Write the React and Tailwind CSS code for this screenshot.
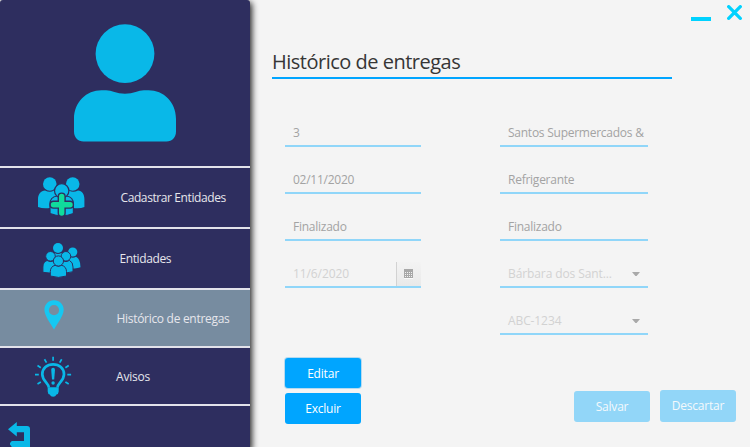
const CYAN = '#09b8e8'
const NAVY = '#2e2e5f'

function UserIcon() {
  return (
    <svg width="102" height="118" viewBox="74 23.5 102 118" fill={CYAN}>
      <circle cx="125" cy="53.2" r="29.4" />
      <path d="M74 118.500C74 101.500 86.500 89.800 101.500 89.800H106C109 89.800 111.500 90.600 113.500 91.300C121 93.800 129 93.800 136.500 91.300C138.500 90.600 141 89.800 144 89.800H148.500C163.500 89.800 176 101.500 176 118.500V131C176 137 172 141 166.500 141H83.500C78 141 74 137 74 131Z" />
    </svg>
  )
}

function AddPeopleIcon() {
  return (
    <svg width="48" height="41" viewBox="37 176 48 41" fill={CYAN}>
      <circle cx="49.8" cy="184" r="6.8" />
      <circle cx="72.700" cy="184" r="6.800" />
      <path d="M38 207V199C38 194 41 191 45 190.500Q50 193 54 190.500L62 200V208H50Q43 209 38 207Z" />
      <path d="M84.400 207V199C84.400 194 82 191 78 190.500Q73 193 69 190.500L61 200V208H73Q80 209 84.400 207Z" />
      <path d="M50 213.500V204Q50 197 57 196H66.500Q73.400 197 73.400 204V213.500Q62 218 50 213.500Z" stroke={NAVY} strokeWidth="1.2" />
      <circle cx="61.700" cy="190.800" r="7.200" stroke={NAVY} strokeWidth="1.200" />
      <path d="M61.700 196.500V213M53.500 204.700H70" stroke={NAVY} strokeWidth="8.200" strokeLinecap="round" />
      <path d="M61.700 196.500V213M53.500 204.700H70" stroke="#10dc9c" strokeWidth="5.400" strokeLinecap="round" />
    </svg>
  )
}

function GroupIcon() {
  return (
    <svg width="40" height="36" viewBox="41.500 242 40 36" fill={CYAN}>
      <circle cx="57.500" cy="248" r="5" />
      <path d="M51.500 256Q52 253.500 54 253Q57.500 255 61 253Q63 253.500 63.500 256L60 258H55Z" />
      <circle cx="72.200" cy="252" r="4.600" />
      <path d="M67 266V260Q67.500 257.500 69.300 256.800Q72.200 258.500 75.500 256.800Q80 259 80 267.300Q76 269 71 268.200Z" />
      <g stroke={NAVY} strokeWidth="1">
        <path d="M42.400 272.300V267Q42.400 262 46.500 260.500Q50 262.500 54 260.500L58 266V272Q49 274 42.400 272.300Z" />
        <path d="M72.500 271.700V267Q72.500 262 69 260.500Q65.500 262.500 62 260.500L58 266V272Q66 274 72.500 271.700Z" />
        <circle cx="50" cy="256.300" r="4.800" />
        <circle cx="65.400" cy="256.300" r="4.800" />
        <path d="M49.800 276V271.500Q50 266.500 54.600 265.300Q57.800 267 61.200 265.300Q65.800 266.500 66 271.500V276Q58 278.800 49.800 276Z" />
        <circle cx="57.900" cy="261" r="5.100" />
      </g>
    </svg>
  )
}

function PinIcon() {
  return (
    <svg width="20" height="30" viewBox="44.300 299.800 20 30">
      <path fill="#16c8f2" fillRule="evenodd" d="M54.300 300C48.700 300 44.700 304.200 44.700 309.500C44.700 315.500 51 323.500 54.300 329.300C57.600 323.500 64 315.500 64 309.500C64 304.200 59.900 300 54.300 300ZM54.300 304.900A5.100 5.100 0 1 1 54.300 315.100A5.100 5.100 0 1 1 54.300 304.900Z" />
    </svg>
  )
}

function BulbIcon() {
  return (
    <svg width="38" height="42" viewBox="34 356 38 42" fill="none" stroke={CYAN}>
      <path d="M48.800 387.500C48.500 382.500 42.300 381 42.300 374.200C42.300 368.500 47 364.300 53.100 364.300C59.200 364.300 64 368.500 64 374.200C64 381 57.800 382.500 57.500 387.500" strokeWidth="2.700" />
      <path d="M47.700 387.300H58.700V391.500Q58.500 394 56.500 394.500Q55.500 396.800 53.100 396.800Q50.700 396.800 49.700 394.500Q47.800 394 47.700 391.500Z" fill={CYAN} stroke="none" />
      <path d="M51.200 369.800Q51.200 367.800 53.100 367.800Q55 367.800 55 369.800L54.200 379.500H52Z" fill={CYAN} stroke="none" />
      <circle cx="53.100" cy="383" r="1.700" fill={CYAN} stroke="none" />
      <path d="M53.100 356.800V360.700M44.500 359.300L46.500 362.600M61.700 359.300L59.700 362.600M37.500 365.500L40.800 367.700M68.700 365.500L65.400 367.700M35 374.700H38.800M67.300 374.700H71.100M37.500 384L40.800 382M68.700 384L65.400 382" strokeWidth="1.700" />
    </svg>
  )
}

function BackIcon() {
  return (
    <svg width="22" height="25" viewBox="8 422 22 25" fill={CYAN}>
      <path d="M8 429.200L16.800 422V426H27Q30 426 30 429V447H11.800L10 444.500V443L11.800 441H24V432.200H16.800V436.400Z" />
    </svg>
  )
}

function NavItem({ className, iconClass, labelClass, icon, label }) {
  return (
    <div className={`flex shrink-0 border-b-2 border-[#e2e2ea] text-[12px] leading-4 text-[#e6e6ec] ${className}`}>
      <div className={`shrink-0 ${iconClass}`}>{icon}</div>
      <span className={`whitespace-nowrap ${labelClass}`}>{label}</span>
    </div>
  )
}

function Field({ children, textClass = 'text-[#a3a3a3] tracking-[-0.25px]', extra }) {
  return (
    <div className="mb-[21px] flex h-[26px] items-stretch border-b-2 border-[#90d6f9]">
      <span className={`ml-2 mt-1 flex-1 whitespace-nowrap text-[12px] leading-4 ${textClass}`}>{children}</span>
      {extra}
    </div>
  )
}

function Arrow() {
  return (
    <svg className="mr-2 mt-[10px] shrink-0" width="8" height="4" viewBox="0 0 8 4">
      <path d="M0 0H8L4.600 4H3.400Z" fill="#a9a9a9" />
    </svg>
  )
}

function CalendarButton() {
  return (
    <span className="flex w-[25px] shrink-0 items-center border-l border-[#d2d2d2] bg-linear-to-b from-[#f3f3f3] to-[#e9e9e9] pl-[7px]">
      <svg width="9" height="10" viewBox="0 0 9 10">
        <path d="M0 0H9V9H0Z" fill="#a8a8a8" />
        <path d="M1 3.500H8M1 5.500H8M1 7.500H8" stroke="#f1f1f1" strokeDasharray="1 1" />
        <path d="M0 9.500H9" stroke="#fafafa" />
      </svg>
    </span>
  )
}

function Button({ className, children }) {
  return (
    <button className={`block w-[76px] rounded-[3px] text-center text-[12px] leading-4 tracking-[-0.2px] ${className}`}>{children}</button>
  )
}

export default function App() {
  const faded = 'text-[#d2d2d2] tracking-[-0.1px]'
  return (
    <div className="flex h-[447px] w-[750px] overflow-hidden bg-[#f4f4f4] font-['Open_Sans','Noto_Sans',sans-serif]">
      <aside className="z-10 flex w-[250px] shrink-0 flex-col rounded-t-[3px] bg-[#2e2e5f] shadow-[1px_3px_6px_1px_rgba(0,0,0,0.85)]">
        <div className="h-[168px] shrink-0 border-b-2 border-[#e2e2ea] pl-[74px] pt-[23.5px]">
          <UserIcon />
        </div>
        <NavItem className="h-[61px]" iconClass="w-[84px] pl-[37px] pt-2" labelClass="ml-[36.500px] mt-[22px] tracking-[-0.4px]" icon={<AddPeopleIcon />} label="Cadastrar Entidades" />
        <NavItem className="h-[61px]" iconClass="w-[84px] pl-[41.500px] pt-[13px]" labelClass="ml-[35.500px] mt-[22px] tracking-[-0.4px]" icon={<GroupIcon />} label="Entidades" />
        <NavItem className="h-[58px] bg-[#778ca0]" iconClass="w-[84px] pl-[44.300px] pt-[9.800px]" labelClass="ml-[32.500px] mt-[21px] tracking-[-0.3px]" icon={<PinIcon />} label="Histórico de entregas" />
        <NavItem className="h-[58px]" iconClass="w-[84px] pl-[34px] pt-2" labelClass="ml-[32px] mt-[21px] tracking-[-0.2px]" icon={<BulbIcon />} label="Avisos" />
        <div className="pl-2 pt-4"><BackIcon /></div>
      </aside>

      <main className="flex flex-1 flex-col">
        <div className="flex h-[46px] shrink-0 justify-end gap-4 pr-2 pt-[5px]">
          <svg className="mt-3" width="20" height="4"><rect width="20" height="4" fill="#00d2ff" /></svg>
          <svg width="15" height="15" viewBox="0 0 15 15" stroke="#00d2ff" strokeWidth="3.300" strokeLinecap="round">
            <path d="M1.700 1.700L13.300 13.300M13.300 1.700L1.700 13.300" />
          </svg>
        </div>
        <h1 className="ml-[22px] h-[33px] w-[400px] shrink-0 whitespace-nowrap border-b-2 border-[#00a5ff] pt-[2px] text-[20px] font-normal leading-7 tracking-[-0.5px] text-[#363636]">Histórico de entregas</h1>

        <div className="ml-[35px] mt-[42px] flex h-[214px] shrink-0 gap-[79px]">
          <div className="w-[136px]">
            <Field>3</Field>
            <Field>02/11/2020</Field>
            <Field>Finalizado</Field>
            <Field textClass={faded} extra={<CalendarButton />}>11/6/2020</Field>
          </div>
          <div className="w-[148px]">
            <Field>Santos Supermercados &amp;</Field>
            <Field>Refrigerante</Field>
            <Field>Finalizado</Field>
            <Field textClass={faded} extra={<Arrow />}>Bárbara dos Sant...</Field>
            <Field textClass={faded} extra={<Arrow />}>ABC-1234</Field>
          </div>
        </div>

        <div className="ml-[35px] mt-[23px] flex items-start">
          <div className="flex flex-col gap-[5px]">
            <Button className="h-[30px] bg-[#00a5ff] pt-0.5 text-white shadow-[0_0_0_1px_#b5daf0]">Editar</Button>
            <Button className="h-[31px] bg-[#00a5ff] pt-px text-white">Excluir</Button>
          </div>
          <div className="ml-[213px] mt-[32px] flex items-end gap-[10px]">
            <Button className="h-[31px] bg-[#92d6f8] pt-px text-[#f4f9fc]">Salvar</Button>
            <Button className="h-8 bg-[#92d6f8] text-[#f4f9fc]">Descartar</Button>
          </div>
        </div>
      </main>
    </div>
  )
}
